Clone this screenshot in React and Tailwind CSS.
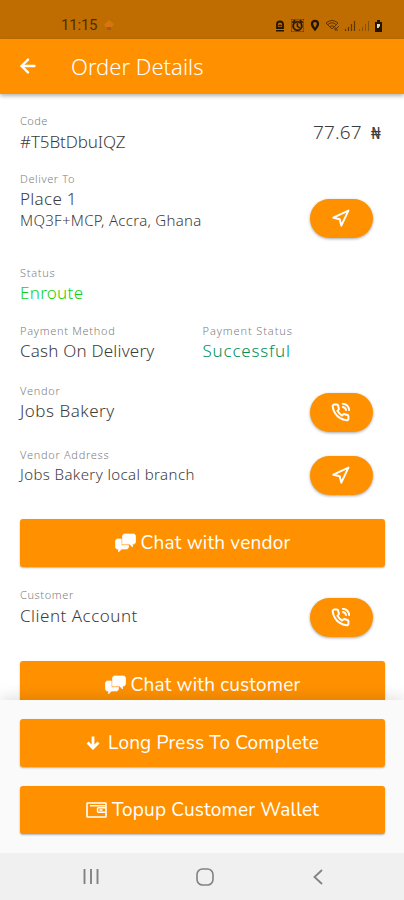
import React from "react";
import { FiArrowLeft, FiNavigation, FiPhoneCall } from "react-icons/fi";
import { MdAlarm } from "react-icons/md";

const ChatIcon = () => (
  <svg
    width="21"
    height="20"
    viewBox="0 0 20 20"
    fill="currentColor"
    stroke="currentColor"
    strokeWidth="0.7"
    strokeLinejoin="round"
  >
    <path d="M5.8 12.2V6H2C.9 6 0 6.9 0 8v6c0 1.1.9 2 2 2h1v3l3-3h5c1.1 0 2-.9 2-2v-1.82a.943.943 0 0 1-.2.021h-7V12.2zM18 1H9c-1.1 0-2 .9-2 2v8h7l3 3v-3h1c1.1 0 2-.899 2-2V3c0-1.1-.9-2-2-2z" />
  </svg>
);

const DownIcon = () => (
  <svg width="14" height="14" viewBox="0 0 14 14" fill="none" stroke="currentColor" strokeWidth="2.8">
    <path d="M7 .5v11M1.5 6.5L7 12l5.5-5.5" />
  </svg>
);

const WalletIcon = () => (
  <svg width="21" height="16" viewBox="0 0 21 16" fill="none" stroke="currentColor" strokeWidth="1.6">
    <rect x="1" y="1" width="19" height="14" rx="0.5" />
    <path d="M4 3.8h16M20 5.7h-7.5a1 1 0 0 0-1 1v2.600a1 1 0 0 0 1 1H20" strokeWidth="1.4" />
    <path d="M13.5 8h3" />
  </svg>
);

const StatusIcons = () => (
  <div className="flex items-center text-[#241500]">
    <svg width="10" height="12" viewBox="0 0 10 12" fill="none" stroke="currentColor">
      <path d="M2 8V4.5a3 3 0 0 1 6 0V8z" strokeWidth="1.8" />
      <path d="M3.5 5.5h3M1 10.7h8" strokeWidth="1.5" />
    </svg>
    <MdAlarm className="ml-1.5 size-[13px]" stroke="currentColor" strokeWidth="1.2" />
    <svg className="ml-[6px]" width="10" height="13" viewBox="0 0 10 13">
      <path
        d="M5 1.8a3 3 0 0 1 3 3C8 7 5 10.5 5 10.5S2 7 2 4.8a3 3 0 0 1 3-3z"
        fill="none"
        stroke="currentColor"
        strokeWidth="2.3"
      />
    </svg>
    <svg className="ml-[5px]" width="16" height="13" viewBox="0 0 16 13" fill="none" stroke="#5e3500">
      <path d="M1 4Q7 -1 13 4L7 10ZM3 5.5Q7 2 11 5.5M5 7.5Q7 6 9 7.5" />
      <path d="M10 11l4-4M10 8v3h3" />
    </svg>
    <svg className="ml-[3px]" width="12" height="12" viewBox="0 0 12 12" stroke="#5e3500">
      <path d="M1.5 9v2M4.5 7v4M7.5 4v7M10.5 1v10" strokeWidth="1.2" />
    </svg>
    <svg className="ml-0.5" width="12" height="12" viewBox="0 0 12 12" stroke="#84500a">
      <path d="M1.5 9v2M4.5 7v4M7.5 4v7M10.5 1v10" strokeWidth="1" />
    </svg>
    <svg className="ml-1" width="9" height="12" viewBox="0 0 9 12">
      <path d="M3 0h3v2h2v10H1V2h2z" fill="currentColor" />
      <path d="M3 4h3v2L4.5 8H3z" fill="#e8d9c0" />
    </svg>
  </div>
);

const Field = ({ label, labelClass = "tracking-[0.7px]", children }) => (
  <div>
    <p className={`h-4 text-[11px] leading-4 text-[#808080] ${labelClass}`}>
      {label}
    </p>
    {children}
  </div>
);

const RoundButton = ({ icon: Icon, className }) => (
  <button
    className={`mr-3 flex h-[39px] w-[63px] items-center justify-center rounded-full bg-[#ff9100] pr-[3px] text-white shadow-[0_1px_3px_rgba(0,0,0,0.35)] ${className}`}
  >
    <Icon className="size-[19px]" strokeWidth={2.5} />
  </button>
);

const WideButton = ({ icon, children, className = "" }) => (
  <button
    className={`flex h-12 w-full shrink-0 items-center justify-center rounded-[3px] bg-[#ff9100] font-[Nunito,'Noto_Sans',sans-serif] text-[19px] font-normal tracking-[0.17px] text-white shadow-[0_1px_2px_rgba(0,0,0,0.3)] ${className}`}
  >
    {icon}
    {children}
  </button>
);

const App = () => {
  return (
    <div className="flex h-[900px] w-[404px] flex-col overflow-hidden bg-white font-['Noto_Sans',sans-serif] font-light text-[#3c3c3c]">
      <div className="flex h-[39px] shrink-0 items-end justify-between bg-[#bf6d00] pr-[21px] pb-[7px] pl-[61px]">
        <div className="flex items-center gap-[7px] font-[Roboto,sans-serif] text-[15px] leading-[14px] font-normal tracking-[-0.2px] text-[#4f2d00]">
          11:15
          <svg width="10" height="11" viewBox="0 0 10 11">
            <path d="M0 5L5 0l5 4-2 3H2z" fill="#d8750b" />
            <path d="M3 7h4v3H3z" fill="#a85728" />
          </svg>
        </div>
        <StatusIcons />
      </div>

      <header className="z-10 flex h-[55px] shrink-0 items-center bg-[#ff9100] pb-px pl-[17px] text-white shadow-[0_2px_4px_rgba(0,0,0,0.3)]">
        <FiArrowLeft className="size-[22px]" strokeWidth={2.6} />
        <h1 className="ml-8 text-[22px]">Order Details</h1>
      </header>

      <main className="min-h-0 flex-1 overflow-hidden px-5 pt-[19px] pr-[19px]">
        <div className="flex h-[58px] justify-between">
          <Field label="Code" labelClass="tracking-[0.4px]">
            <p className="text-[17px] leading-[25px] tracking-[-0.1px]">#T5BtDbuIQZ</p>
          </Field>
          <p className="mt-[7px] pr-1 text-[19px] leading-6 tracking-[0.2px]">
            77.67 <span className="ml-1 text-[17px] font-normal">₦</span>
          </p>
        </div>

        <div className="flex h-[94px] justify-between">
          <Field label="Deliver To" labelClass="tracking-[0.6px]">
            <p className="text-[17px] leading-6 tracking-[0.3px]">Place 1</p>
            <p className="text-[15px] leading-[19px] tracking-[0.3px]">
              MQ3F+MCP, Accra, Ghana
            </p>
          </Field>
          <RoundButton icon={FiNavigation} className="mt-7" />
        </div>

        <div className="h-[58px]">
          <Field label="Status">
            <p className="text-[17px] leading-6 tracking-[0.3px] text-[#0fd00f]">
              Enroute
            </p>
          </Field>
        </div>

        <div className="grid h-[60px] grid-cols-2">
          <Field label="Payment Method">
            <p className="text-[17px] leading-6 tracking-[0.2px]">
              Cash On Delivery
            </p>
          </Field>
          <Field label="Payment Status" labelClass="tracking-[0.9px]">
            <p className="text-[17px] leading-6 tracking-[0.8px] text-[#008f5c]">
              Successful
            </p>
          </Field>
        </div>

        <div className="flex h-16 justify-between">
          <Field label="Vendor">
            <p className="text-[17px] leading-6 tracking-[0.5px]">Jobs Bakery</p>
          </Field>
          <RoundButton icon={FiPhoneCall} className="mt-2.5" />
        </div>

        <div className="flex h-[72px] justify-between">
          <Field label="Vendor Address">
            <p className="text-[15px] leading-[22px] tracking-[0.4px]">
              Jobs Bakery local branch
            </p>
          </Field>
          <RoundButton icon={FiNavigation} className="mt-[9px]" />
        </div>

        <WideButton icon={<ChatIcon />}>
          <span className="ml-[5px]">Chat with vendor</span>
        </WideButton>

        <div className="mt-5 flex h-[74px] justify-between">
          <Field label="Customer" labelClass="tracking-[0.6px]">
            <p className="text-[17px] leading-[25px] tracking-[0.5px]">
              Client Account
            </p>
          </Field>
          <RoundButton icon={FiPhoneCall} className="mt-[11px]" />
        </div>

        <WideButton icon={<ChatIcon />}>
          <span className="ml-[5px]">Chat with customer</span>
        </WideButton>
      </main>

      <footer className="z-10 h-[153px] shrink-0 bg-[#fafafa] pt-[19px] pr-[19px] pl-5 shadow-[0_-3px_14px_rgba(0,0,0,0.12)]">
        <WideButton icon={<DownIcon />}>
          <span className="ml-2">Long Press To Complete</span>
        </WideButton>
        <WideButton icon={<WalletIcon />} className="mt-[19px]">
          <span className="ml-[5px]">Topup Customer Wallet</span>
        </WideButton>
      </footer>

      <nav className="z-10 flex h-[47px] shrink-0 items-center justify-between bg-[#f0f0f0] pr-[78px] pl-[83px] text-[#828282]">
        <svg width="16" height="16" viewBox="0 0 16 16" stroke="currentColor" strokeWidth="1.9">
          <path d="M1.5 0v15M8 0v15M14.5 0v15" />
        </svg>
        <svg width="18" height="18" viewBox="0 0 18 18" fill="none" stroke="currentColor" strokeWidth="1.6">
          <rect x="1" y="1" width="16" height="16" rx="5.5" />
        </svg>
        <svg width="16" height="16" viewBox="0 0 16 16" fill="none" stroke="currentColor" strokeWidth="1.8">
          <path d="M12 1L4.5 8l7.5 7" />
        </svg>
      </nav>
    </div>
  );
};

export default App;
